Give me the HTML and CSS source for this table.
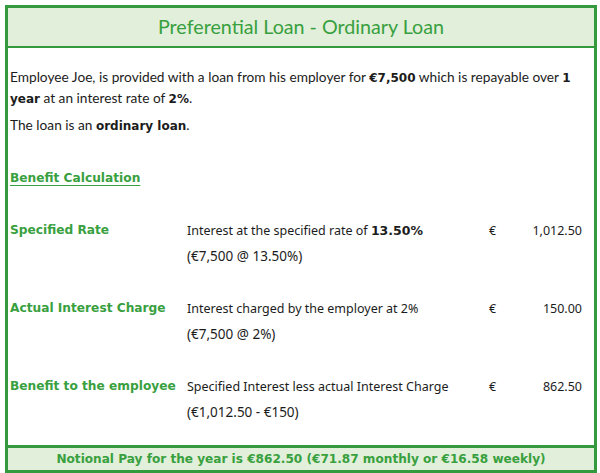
FILE: index.html
```html
<!DOCTYPE html>
<html>
<head>
<meta charset="utf-8">
<link rel="stylesheet" href="styles.css">
</head>
<body>
<div class="sheet">
  <div class="header">Preferential Loan - Ordinary Loan</div>
  <div class="content">
    <p class="intro">Employee Joe, is provided with a loan from his employer for <b>€7,500</b> which is repayable over <b>1</b><br><b>year</b> at an interest rate of <b>2%</b>.</p>
    <p class="intro second">The loan is an <b>ordinary loan</b>.</p>
    <div class="section-title">Benefit Calculation</div>
    <div class="calc">
      <div class="label">Specified Rate</div>
      <div class="desc">Interest at the specified rate of <b>13.50%</b></div>
      <div class="cur">€</div>
      <div class="amt">1,012.50</div>
      <div class="label"></div>
      <div class="desc sub">(€7,500 @ 13.50%)</div>
      <div class="cur"></div>
      <div class="amt"></div>
      <div class="spacer"></div>

      <div class="label">Actual Interest Charge</div>
      <div class="desc">Interest charged by the employer at 2%</div>
      <div class="cur">€</div>
      <div class="amt">150.00</div>
      <div class="label"></div>
      <div class="desc sub">(€7,500 @ 2%)</div>
      <div class="cur"></div>
      <div class="amt"></div>
      <div class="spacer"></div>

      <div class="label">Benefit to the employee</div>
      <div class="desc">Specified Interest less actual Interest Charge</div>
      <div class="cur">€</div>
      <div class="amt">862.50</div>
      <div class="label"></div>
      <div class="desc sub">(€1,012.50 - €150)</div>
      <div class="cur"></div>
      <div class="amt"></div>
    </div>
  </div>
  <div class="footer">Notional Pay for the year is €862.50 (€71.87 monthly or €16.58 weekly)</div>
</div>
</body>
</html>
```

FILE: styles.css
```css
html, body {
  margin: 0;
  padding: 0;
  background: #ffffff;
}

.sheet {
  margin: 5px;
  width: 586px;
  border: 3px solid #339a3e;
  color: #1c1c1c;
}

.header {
  height: 38px;
  line-height: 38px;
  background: #e2efda;
  border-bottom: 2px solid #339a3e;
  text-align: center;
  color: #38a03e;
  font-family: "Lato", "Liberation Sans", sans-serif;
  font-size: 19.7px;
}

.content {
  padding: 19px 12px 20px 2px;
}

.intro {
  margin: 0;
  font-family: "Lato", "Liberation Sans", sans-serif;
  font-size: 13.7px;
  line-height: 20px;
  white-space: nowrap;
}

.intro b {
  font-family: "DejaVu Sans", sans-serif;
  font-size: 12px;
}

.intro.second {
  margin-top: 6px;
}

.section-title {
  margin-top: 32px;
  line-height: 20px;
  font-family: "DejaVu Sans", sans-serif;
  font-weight: bold;
  font-size: 12.2px;
  color: #38a03e;
  text-decoration: underline;
  text-underline-offset: 3px;
}

.calc {
  margin-top: 29px;
  display: grid;
  grid-template-columns: 177px 302px 30px 1fr;
  grid-auto-rows: 26px;
  align-items: center;
}

.label {
  font-family: "DejaVu Sans", sans-serif;
  font-weight: bold;
  font-size: 12.2px;
  color: #38a03e;
  white-space: nowrap;
}

.desc, .cur, .amt {
  font-family: "Noto Sans", sans-serif;
  font-size: 12.5px;
}

.desc.sub {
  font-size: 13.5px;
}

.desc b {
  font-family: "DejaVu Sans", sans-serif;
  font-size: 12.5px;
}

.amt {
  text-align: right;
}

.spacer {
  grid-column: 1 / -1;
}

.footer {
  background: #e2efda;
  border-top: 3px solid #339a3e;
  height: 22px;
  line-height: 22px;
  text-align: center;
  font-family: "DejaVu Sans", sans-serif;
  font-weight: bold;
  font-size: 12.1px;
  color: #38a03e;
}
```
